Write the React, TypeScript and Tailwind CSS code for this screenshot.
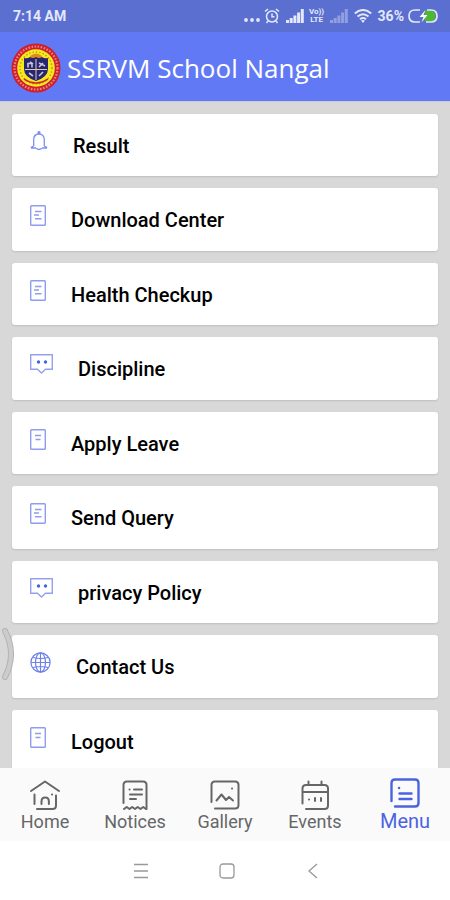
import type { ReactNode } from "react";

function Logo() {
  return (
    <svg className="size-[50px] shrink-0" viewBox="0 0 50 50" role="img" aria-label="School crest">
      <circle cx="25" cy="25" r="24.5" fill="#cf1f2c" />
      <circle cx="25" cy="25" r="21.5" fill="none" stroke="#e8847c" strokeWidth="2.2" strokeDasharray="1.6 1.5" />
      <circle cx="25" cy="25" r="18.8" fill="#f6ea1c" />
      <circle cx="25" cy="25" r="16" fill="none" stroke="#b59a1c" strokeWidth="1.4" strokeDasharray="1.4 2" />
      <path d="M19 13q6-5 12 0l-1 3H20z" fill="#e08a1e" />
      <path d="M13 15q3 1 6-1 3 2 6 0 3 2 6 0 3 2 6 1v11q0 8-12 12-12-4-12-12z" fill="#28266f" />
      <path d="M25 16v21M14 26.500h22" stroke="#d9cfae" strokeWidth="1" />
      <path d="M17 24.500v-4h4v4M28 20l6 3M28 24l4-4M18 30l4 3M28 33l4-4M19 19l3 2" fill="none" stroke="#c9c5dd" strokeWidth="1.6" />
      <path d="M13 36q12 8 24 0" fill="none" stroke="#cf2b2c" strokeWidth="1.600" />
    </svg>
  );
}

function Bell() {
  return (
    <svg className="h-5 w-[18px] shrink-0" viewBox="0 0 18 20" fill="none" stroke="#7f8fee" strokeWidth="1.3" aria-hidden="true">
      <path d="M3.7 15V8.5C3.7 5 6 3 9 3s5.300 2 5.300 5.500V15" />
      <path d="M.8 16.600 3.700 15M17.200 16.600 14.300 15M1 17h5M12 17h5M6.200 17.300q2.800 2.400 5.600 0" />
      <circle cx="9" cy="1.700" r="1" fill="#6478ea" />
    </svg>
  );
}

function Doc({ lines }: { lines: number }) {
  return (
    <svg className="h-[21px] w-4 shrink-0" viewBox="0 0 16 21" fill="none" stroke="#8f9cf0" strokeWidth="1.4" aria-hidden="true">
      <rect x=".7" y=".7" width="14.600" height="19.600" rx=".8" />
      {lines === 3 ? <path d="M5 6.500h6.500M4 10h5M5 13.800h6.500" /> : <path d="M5 6.500h6M5.500 10.500h5" />}
    </svg>
  );
}

function Chat() {
  return (
    <svg className="h-5 w-[23px] shrink-0" viewBox="0 0 23 20" fill="none" stroke="#95a1f0" strokeWidth="1.4" aria-hidden="true">
      <path d="M.7.7h21.600v14.600h-6.800L11.500 19l-4-3.700H.7z" />
      <circle cx="8.500" cy="8" r="1.700" fill="#3f66d8" stroke="none" />
      <circle cx="15.500" cy="8" r="1.700" fill="#3f66d8" stroke="none" />
    </svg>
  );
}

function Globe() {
  return (
    <svg className="size-[21px] shrink-0" viewBox="0 0 21 21" fill="none" stroke="#6f82e8" strokeWidth="1.2" aria-hidden="true">
      <circle cx="10.500" cy="10.500" r="9.600" />
      <ellipse cx="10.500" cy="10.500" rx="5" ry="9.600" />
      <path d="M10.500 1v19M1 10.500h19M3 5.500q7.500 2 15 0M3 15.500q7.500-2 15 0" />
    </svg>
  );
}

const items: { label: string; icon: ReactNode }[] = [
  { label: "Result", icon: <Bell /> },
  { label: "Download Center", icon: <Doc lines={3} /> },
  { label: "Health Checkup", icon: <Doc lines={3} /> },
  { label: "Discipline", icon: <Chat /> },
  { label: "Apply Leave", icon: <Doc lines={2} /> },
  { label: "Send Query", icon: <Doc lines={3} /> },
  { label: "privacy Policy", icon: <Chat /> },
  { label: "Contact Us", icon: <Globe /> },
  { label: "Logout", icon: <Doc lines={2} /> },
];

function TabIcon({ children }: { children: ReactNode }) {
  return (
    <svg className="size-[30px]" viewBox="0 0 30 30" fill="none" stroke="currentColor" strokeWidth="2" strokeLinecap="round" strokeLinejoin="round" aria-hidden="true">
      {children}
    </svg>
  );
}

const tabs: { label: string; icon: ReactNode }[] = [
  {
    label: "Home",
    icon: (
      <>
        <path d="M1 11 15 1.500 29 11M4.500 14.500v9.500M26 15.500v10q0 3.500-3.500 3.500H7" />
        <path d="M11.500 24v-2.500q0-4 3.700-4t3.700 4V24M22 14.500h.1" />
      </>
    ),
  },
  {
    label: "Notices",
    icon: (
      <>
        <path d="M3.500 23V5q0-3.500 3.500-3.500h16Q26.500 1.500 26.500 5v24" />
        <path d="m4 29 2.700-2 2.800 2 2.700-2 2.800 2 2.700-2 2.800 2 2.700-2 2.800 2M9.500 9.500h.1M14 9.500h8M10 14.500h12M10 19h6" />
      </>
    ),
  },
  {
    label: "Gallery",
    icon: (
      <>
        <path d="M1.500 22V5Q1.500 1.500 5 1.500h20q3.500 0 3.500 3.500v20q0 3.500-3.500 3.500H5" />
        <path d="m6.500 20.500 5-6 4.500 5.500 3-3 4 3.500M22 8.500h.1" />
      </>
    ),
  },
  {
    label: "Events",
    icon: (
      <>
        <path d="M2.500 23.500V8.500q0-3.500 3.500-3.500h18.500q3.500 0 3.500 3.500V25.500q0 3.500-3.500 3.500H6M8.500 1.500V5M21.500 1.500V5M2.500 12h25" />
        <path d="M9 19.500h.1M15 18v3M21 18v3" />
      </>
    ),
  },
  {
    label: "Menu",
    icon: (
      <>
        <path d="M1.500 23V5q0-3.500 3.500-3.500h20q3.500 0 3.500 3.500v20q0 3.500-3.500 3.500H5" strokeWidth="2.400" />
        <path d="M9 10h.1M9.500 15.500h12M9.500 21h12" strokeWidth="2.400" />
      </>
    ),
  },
];

function Signal({ dim = false }: { dim?: boolean }) {
  return (
    <svg className={dim ? "h-[14px] w-[18px] opacity-40" : "h-[14px] w-[18px]"} viewBox="0 0 18 14" fill="currentColor" aria-hidden="true">
      <path d="M0 11h3v3H0zM3.700 9h3v5h-3zM7.400 6.500h3V14h-3zM11.100 3.500h3V14h-3zM14.800 0h3v14h-3z" />
    </svg>
  );
}

function StatusBar() {
  return (
    <div className="flex h-8 shrink-0 items-center bg-[#5a6fd0] pr-3 pl-[13px] text-[14px] font-bold text-[#e3e8fb]">
      <time>7:14 AM</time>
      <div className="ml-auto flex items-center">
        <svg className="mt-2 mr-1 h-1 w-4" viewBox="0 0 16 4" fill="currentColor" aria-hidden="true">
          <circle cx="2" cy="2" r="1.900" />
          <circle cx="8" cy="2" r="1.900" />
          <circle cx="14" cy="2" r="1.900" />
        </svg>
        <svg className="mr-[6px] size-4" viewBox="0 0 16 16" fill="none" stroke="currentColor" strokeWidth="1.500" aria-hidden="true">
          <circle cx="8" cy="8.500" r="5.500" />
          <path d="M8 5.500v3.300h2.500M1 3.500 4 1M12 1l3 2.500M4 13l-1.500 2M12 13l1.500 2" />
        </svg>
        <Signal />
        <span className="mx-[5px] flex w-4 flex-col items-center text-[8px] leading-[8px]">
          <span>Vo))</span>
          <span>LTE</span>
        </span>
        <Signal dim />
        <svg className="mx-[6px] h-[14px] w-[18px]" viewBox="0 0 18 14" fill="none" stroke="currentColor" strokeWidth="2" aria-hidden="true">
          <path d="M.8 4.500q8.200-7 16.400 0M3.500 7.500q5.500-4.600 11 0M6 10.200q3-2.400 6 0" />
          <path d="m9 14-2-2.500q2-1.200 4 0z" fill="currentColor" stroke="none" />
        </svg>
        <span>36%</span>
        <svg className="ml-1 h-[14px] w-[30px]" viewBox="0 0 30 14" aria-hidden="true">
          <path d="M17 1.500h5q5.500 0 5.500 5.500T22 12.500h-5" fill="#4db92c" />
          <path d="M12 1H7Q1 1 1 7t6 6h5M19 1h4q6 0 6 6t-6 6h-5" fill="none" stroke="currentColor" strokeWidth="1.700" />
          <path d="m17.500 1-6 7h4l-2 5.500 6-7.500h-4z" fill="#fff" />
        </svg>
      </div>
    </div>
  );
}

export default function App() {
  return (
    <div className="flex h-screen flex-col overflow-hidden bg-white font-['Roboto',sans-serif]">
      <StatusBar />
      <header className="flex h-[69px] shrink-0 items-center gap-[6px] bg-[#6279f6] px-[11px] pt-[3px]">
        <Logo />
        <h1 className="font-['Open_Sans',sans-serif] text-[26px] leading-9 text-white">SSRVM School Nangal</h1>
      </header>

      <main className="relative min-h-0 flex-1 overflow-hidden border-t border-[#c9cbd6] bg-[#d8d8d8] px-3 pt-3">
        <ul className="grid h-[658px] auto-rows-fr gap-3">
          {items.map((item) => (
            <li key={item.label}>
              <button
                type="button"
                className="flex h-full w-full items-start gap-[25px] rounded-[3px] bg-white pt-[17px] pl-[18px] text-left shadow-[0_1px_2px_rgba(0,0,0,0.12)]"
              >
                {item.icon}
                <span className="mt-[3px] text-[20px] leading-6 font-medium text-black">{item.label}</span>
              </button>
            </li>
          ))}
        </ul>
        <svg className="absolute top-[526px] left-[2px] h-[52px] w-3" viewBox="0 0 12 52" aria-hidden="true">
          <path d="M3 3q12 23 0 46" fill="none" stroke="#b4b4b4" strokeWidth="6" strokeLinecap="round" />
          <path d="M3 3q12 23 0 46" fill="none" stroke="#ccc" strokeWidth="4" strokeLinecap="round" />
        </svg>
      </main>

      <nav aria-label="Main" className="grid h-[73px] shrink-0 grid-cols-5 bg-[#fafafa]">
        {tabs.map((tab) => {
          const active = tab.label === "Menu";
          return (
            <button
              key={tab.label}
              type="button"
              aria-current={active ? "page" : undefined}
              className={
                active
                  ? "flex flex-col items-center pt-[10px] text-[20px] leading-[26px] text-[#4c63e0]"
                  : "flex flex-col items-center pt-3 text-[18px] leading-6 text-[#666]"
              }
            >
              <TabIcon>{tab.icon}</TabIcon>
              {tab.label}
            </button>
          );
        })}
      </nav>

      <div className="flex h-[59px] shrink-0 items-center justify-center gap-[70px] bg-white pl-[3px] text-[#999]">
        <button type="button" aria-label="Recent apps">
          <svg className="size-4" viewBox="0 0 16 16" fill="none" stroke="currentColor" strokeWidth="1.300">
            <path d="M1 1.500h14M1 8h14M1 14.500h14" />
          </svg>
        </button>
        <button type="button" aria-label="Home screen">
          <svg className="size-4" viewBox="0 0 16 16" fill="none" stroke="currentColor" strokeWidth="1.300">
            <rect x="1" y="1" width="14" height="14" rx="3" />
          </svg>
        </button>
        <button type="button" aria-label="Back">
          <svg className="size-4" viewBox="0 0 16 16" fill="none" stroke="currentColor" strokeWidth="1.300">
            <path d="m12 1-8 7 8 7" />
          </svg>
        </button>
      </div>
    </div>
  );
}
